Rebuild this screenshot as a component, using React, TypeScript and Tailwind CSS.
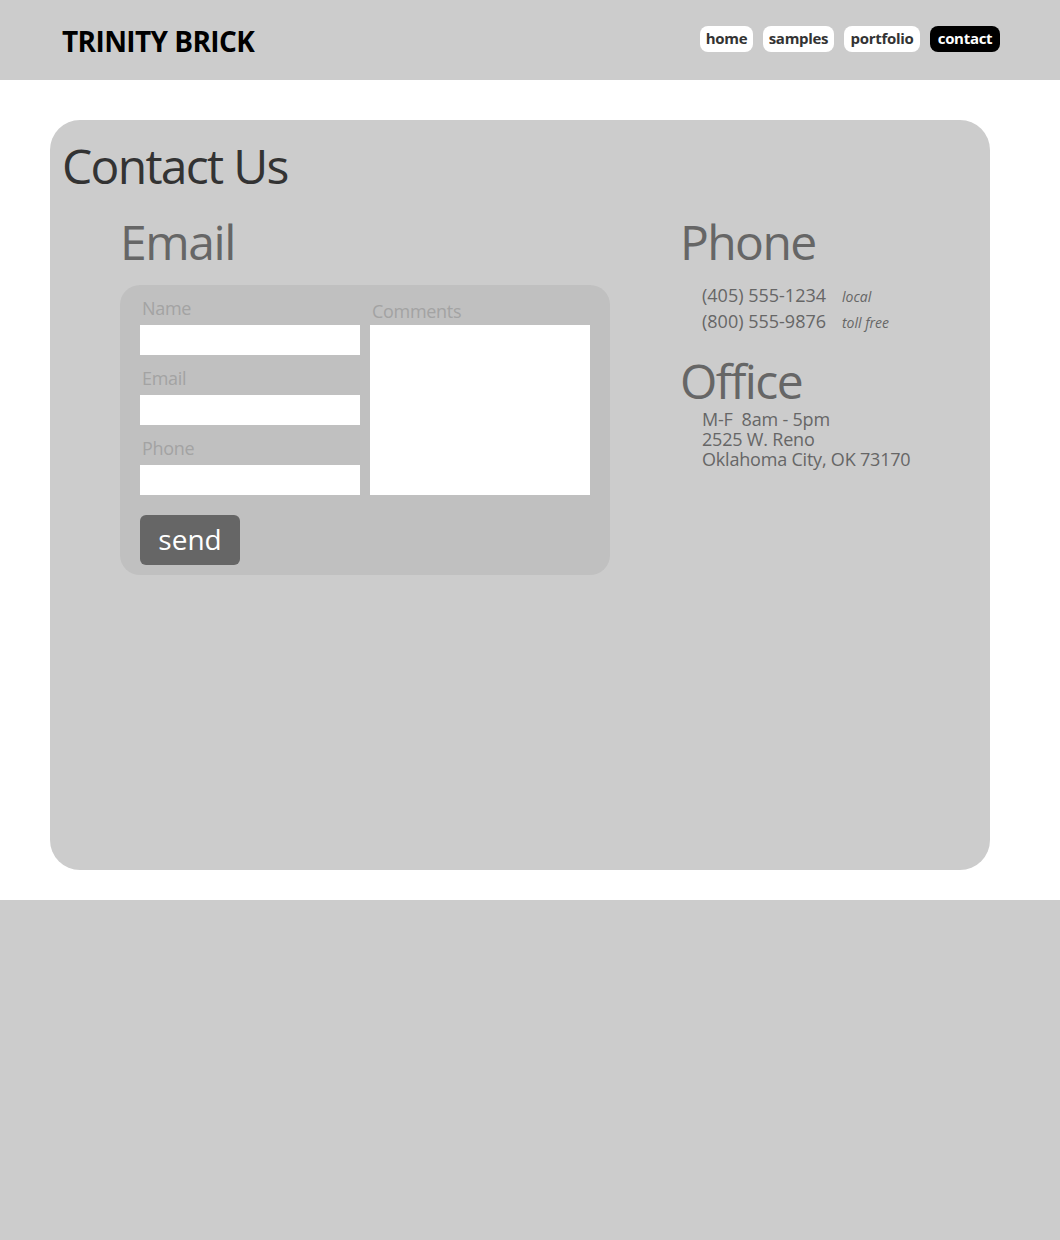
const navItems = [
  { label: "home", active: false, width: "w-[53px]" },
  { label: "samples", active: false, width: "w-[71px]" },
  { label: "portfolio", active: false, width: "w-[76px]" },
  { label: "contact", active: true, width: "w-[70px]" },
];

const fields = ["Name", "Email", "Phone"];

function Header() {
  return (
    <header className="h-[80px] bg-[#cccccc] flex items-center justify-between pl-[62px] pr-[60px]">
      <h1 className="text-[28px] font-bold text-black tracking-[-0.6px] leading-none mt-[2px]">
        TRINITY BRICK
      </h1>
      <nav className="flex gap-[10px] -mt-[3px]">
        {navItems.map((item) => (
          <a
            key={item.label}
            href="#"
            className={`${item.width} h-[26px] rounded-[8px] flex items-center justify-center text-[15px] font-bold tracking-[-0.3px] leading-none ${
              item.active ? "bg-black text-white" : "bg-white text-[#333333]"
            }`}
          >
            {item.label}
          </a>
        ))}
      </nav>
    </header>
  );
}

function EmailForm() {
  return (
    <div className="w-[490px] bg-[#c0c0c0] rounded-[20px] px-[20px] pt-[10px] pb-[10px]">
      <div className="flex gap-[10px]">
        <div className="w-[220px] flex flex-col">
          {fields.map((f) => (
            <div key={f} className="flex flex-col">
              <label className="text-[18px] text-[#a3a3a3] leading-[26px] pb-[4px] pl-[2px] tracking-[-0.3px]">{f}</label>
              <input className="h-[30px] bg-white outline-none mb-[10px]" />
            </div>
          ))}
        </div>
        <div className="w-[220px] flex flex-col">
          <label className="text-[18px] text-[#a3a3a3] leading-[28px] pl-[2px] pt-[2px] tracking-[-0.3px]">
            Comments
          </label>
          <textarea className="h-[170px] bg-white outline-none resize-none" />
        </div>
      </div>
      <button className="mt-[10px] w-[100px] h-[50px] bg-[#666666] rounded-[6px] text-white text-[28px] leading-none pb-[2px]">
        send
      </button>
    </div>
  );
}

export default function App() {
  return (
    <div className="min-h-[1240px] bg-white font-['Open_Sans',sans-serif] flex flex-col">
      <Header />
      <main className="pl-[50px] pr-[70px] pt-[40px] pb-[30px]">
        <section className="h-[750px] bg-[#cccccc] rounded-[30px] pl-[12px] pt-[18px]">
          <h2 className="text-[48px] text-[#333333] leading-[56px] tracking-[-1.7px]">Contact Us</h2>
          <div className="flex mt-[20px]">
            <div className="pl-[58px] w-[620px]">
              <h3 className="text-[48px] text-[#666666] leading-[56px] tracking-[-1.4px] mb-[15px]">Email</h3>
              <EmailForm />
            </div>
            <div className="-ml-[2px]">
              <h3 className="text-[48px] text-[#666666] leading-[56px] tracking-[-1.6px]">Phone</h3>
              <div className="pl-[22px] mt-[13px] text-[18px] text-[#666666] leading-[25px]">
                <div className="flex items-baseline">
                  <span className="w-[140px]">(405) 555-1234</span>
                  <span className="italic text-[14px]">local</span>
                </div>
                <div className="flex items-baseline">
                  <span className="w-[140px]">(800) 555-9876</span>
                  <span className="italic text-[14px]">toll free</span>
                </div>
              </div>
              <h3 className="text-[48px] text-[#666666] leading-[56px] tracking-[-1.6px] mt-[18px]">Office</h3>
              <div className="pl-[22px] text-[18px] text-[#666666] leading-[20px] tracking-[-0.2px]">
                <p>M-F&nbsp;&nbsp;8am - 5pm</p>
                <p>2525 W. Reno</p>
                <p>Oklahoma City, OK 73170</p>
              </div>
            </div>
          </div>
        </section>
      </main>
      <footer className="flex-1 bg-[#cccccc]" />
    </div>
  );
}
